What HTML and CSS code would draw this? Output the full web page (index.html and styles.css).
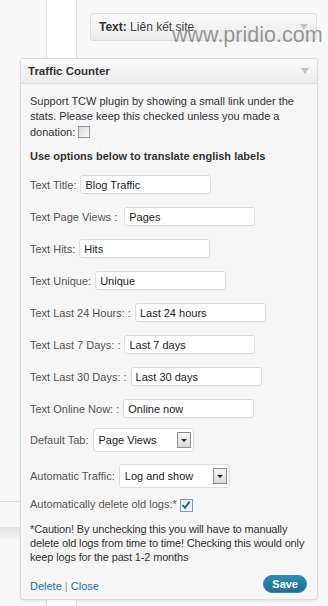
FILE: index.html
```html
<!DOCTYPE html>
<html lang="vi">
<head>
    <meta charset="UTF-8">
    <meta name="viewport" content="width=device-width, initial-scale=1.0">
    <title>Widgets - Traffic Counter</title>
    <link rel="stylesheet" href="styles.css">
</head>
<body>
    <div class="page">
        <div class="widget-mini">
            <h4>Text:<span class="in-title"> Liên kết site</span></h4>
            <span class="arrow"></span>
        </div>
        <span class="watermark">www.pridio.com</span>

        <div class="widget">
            <div class="widget-top">
                <h4>Traffic Counter</h4>
                <span class="arrow"></span>
            </div>
            <div class="widget-inside">
                <p class="note">Support TCW plugin by showing a small link under the stats. Please keep this checked unless you made a donation: <span class="checkbox"></span></p>
                <h5>Use options below to translate english labels</h5>

                <p class="field"><label>Text Title:</label><input type="text" value="Blog Traffic"></p>
                <p class="field field-wide"><label>Text Page Views :</label><input type="text" value="Pages"></p>
                <p class="field"><label>Text Hits:</label><input type="text" value="Hits"></p>
                <p class="field"><label>Text Unique:</label><input type="text" value="Unique"></p>
                <p class="field"><label>Text Last 24 Hours: :</label><input type="text" value="Last 24 hours"></p>
                <p class="field"><label>Text Last 7 Days: :</label><input type="text" value="Last 7 days"></p>
                <p class="field"><label>Text Last 30 Days: :</label><input type="text" value="Last 30 days"></p>
                <p class="field"><label>Text Online Now: :</label><input type="text" value="Online now"></p>

                <p class="field field-select first-select">
                    <label>Default Tab:</label>
                    <span class="select select-tab"><span class="select-value">Page Views</span><span class="select-btn"></span></span>
                </p>
                <p class="field field-select">
                    <label>Automatic Traffic:</label>
                    <span class="select select-traffic"><span class="select-value">Log and show</span><span class="select-btn"></span></span>
                </p>

                <p class="check-row">Automatically delete old logs:* <span class="checkbox checked"><svg width="10" height="10" viewBox="0 0 10 10"><path d="M1.5 5 L4 7.8 L8.6 1.6" fill="none" stroke="#2457a4" stroke-width="1.8"/></svg></span></p>

                <p class="caution">*Caution! By unchecking this you will have to manually delete old logs from time to time! Checking this would only keep logs for the past 1-2 months</p>

                <div class="widget-control">
                    <span class="links"><a href="#">Delete</a> <span class="sep">|</span> <a href="#">Close</a></span>
                    <button class="save">Save</button>
                </div>
            </div>
        </div>
    </div>
</body>
</html>
```

FILE: styles.css
```css
* {
    box-sizing: border-box;
}

body {
    margin: 0;
    height: 606px;
    overflow: hidden;
    font-family: Arial, "Liberation Sans", sans-serif;
    font-size: 11px;
    color: #333;
    background:
        linear-gradient(#dedede, #dedede) 0 501px / 20px 1px no-repeat,
        linear-gradient(#e2e2e2, #f6f6f6) 0 527px / 20px 13px no-repeat,
        linear-gradient(to right, transparent 46px, #e0e0e0 46px, #e0e0e0 47px, #fff 47px, #fff 76px, #e0e0e0 76px, #e0e0e0 77px, transparent 77px),
        #f8f8f8;
}

.page {
    position: relative;
    padding-top: 13px;
}

.arrow {
    margin-left: auto;
    margin-right: 8px;
    width: 0;
    height: 0;
    border-left: 4px solid transparent;
    border-right: 4px solid transparent;
    border-top: 6px solid #c4c4c4;
}

/* collapsed widget above */
.widget-mini {
    display: flex;
    align-items: center;
    margin-left: 90px;
    width: 227px;
    height: 28px;
    padding-left: 8px;
    border: 1px solid #dfdfdf;
    border-radius: 3px;
    background: linear-gradient(#fafafa, #ececec);
}

.widget-mini h4 {
    margin: 0;
    font-size: 12px;
    color: #333;
}

.in-title {
    font-weight: normal;
    color: #444;
}

.watermark {
    position: absolute;
    left: 172px;
    top: 23px;
    font-size: 21.5px;
    color: rgba(115, 115, 115, 0.72);
}

/* open widget */
.widget {
    margin: 17px 0 0 20px;
    width: 298px;
    border: 1px solid #dcdcdc;
    border-radius: 3px;
    background: #f6f6f6;
    box-shadow: 0 1px 3px rgba(0, 0, 0, 0.08);
}

.widget-top {
    display: flex;
    align-items: center;
    height: 25px;
    padding-left: 7px;
    border-bottom: 1px solid #dcdcdc;
    background: linear-gradient(#fafafa, #ececec);
}

.widget-top h4 {
    margin: 0;
    font-size: 11.5px;
    color: #333;
}

.widget-inside {
    padding: 10px 10px 6px 9px;
}

.widget-inside p {
    margin: 0;
}

.note {
    line-height: 15.3px;
    color: #333;
}

h5 {
    margin: 9px 0 11px;
    font-size: 11px;
    line-height: 15.3px;
    color: #333;
}

.field {
    display: flex;
    align-items: center;
    gap: 4px;
    height: 19px;
    margin-bottom: 13px !important;
    color: #555;
}

.field input {
    width: 131px;
    height: 19px;
    padding: 0 4px;
    border: 1px solid #dcdcdc;
    border-radius: 3px;
    background: #fff;
    font-family: inherit;
    font-size: 11px;
    color: #222;
}

.field-wide input {
    margin-left: 3px;
}

.field-select {
    height: 24px;
    margin-bottom: 12px !important;
}

.first-select {
    margin-top: -3px !important;
}

.select {
    display: flex;
    align-items: center;
    height: 24px;
    padding: 0 2px 0 5px;
    border: 1px solid #dcdcdc;
    border-radius: 3px;
    background: #fff;
    color: #222;
}

.select-tab {
    width: 101px;
}

.select-traffic {
    width: 111px;
}

.select-value {
    flex: 1;
}

.select-btn {
    display: flex;
    align-items: center;
    justify-content: center;
    width: 14px;
    height: 16px;
    border: 1px solid #8e8e8e;
    background: linear-gradient(#f6f6f6, #dadada);
}

.select-btn::after {
    content: "";
    border-left: 3px solid transparent;
    border-right: 3px solid transparent;
    border-top: 3px solid #222;
    margin-top: 1px;
}

.checkbox {
    display: inline-flex;
    align-items: center;
    justify-content: center;
    width: 12px;
    height: 12px;
    vertical-align: -2px;
    border: 1px solid #999;
    background: linear-gradient(135deg, #d8d8d8, #fbfbfb);
}

.checkbox.checked {
    width: 13px;
    height: 13px;
    border-color: #7f9db9;
    background: linear-gradient(135deg, #dfe6ee, #fff);
}

.check-row {
    margin-top: -3px !important;
    line-height: 15px;
    color: #555;
}

.caution {
    margin: 11px -3px 0 0 !important;
    line-height: 13.8px;
    letter-spacing: -0.15px;
    color: #333;
}

.widget-control {
    display: flex;
    align-items: flex-end;
    justify-content: space-between;
    margin-top: 10px;
}

.links {
    line-height: 13px;
}

.links a {
    color: #21759b;
    text-decoration: none;
}

.sep {
    color: #999;
}

.save {
    height: 18px;
    padding: 0 8px;
    border: 1px solid #298cba;
    border-radius: 11px;
    background: linear-gradient(#2e8ab5, #1f6f95);
    font-family: inherit;
    font-size: 11px;
    font-weight: bold;
    color: #fff;
}
```
